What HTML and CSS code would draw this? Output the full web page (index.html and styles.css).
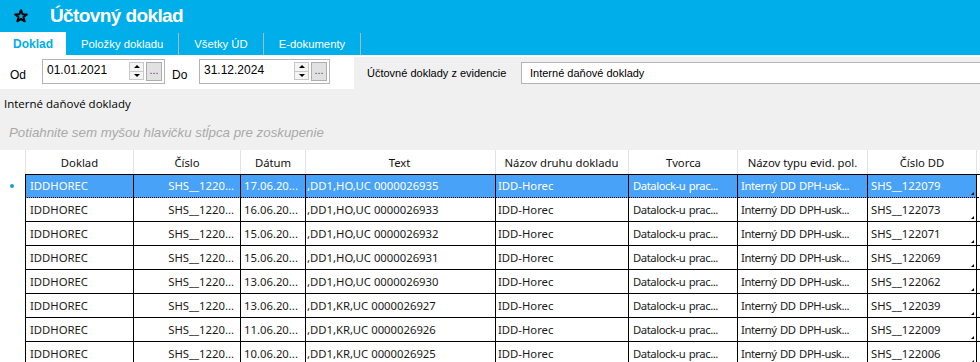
FILE: index.html
```html
<!DOCTYPE html>
<html lang="sk">
<head>
  <meta charset="UTF-8">
  <meta name="viewport" content="width=device-width, initial-scale=1.0">
  <link rel="stylesheet" href="styles.css">
  <title>Účtovný doklad</title>
</head>
<body>
<div class="header">
  <div class="titleRow">
    <svg class="star" width="14" height="14" viewBox="0 0 14 14">
      <polygon points="7,1.2 8.6,5.2 12.8,5.4 9.5,8.1 10.6,12.3 7,9.9 3.4,12.3 4.5,8.1 1.2,5.4 5.4,5.2"
        fill="none" stroke="#000" stroke-width="2" stroke-linejoin="round" />
    </svg>
    <span class="title">Účtovný doklad</span>
  </div>
  <div class="tabs">
    <span class="tab active">Doklad</span>
    <span class="tab">Položky dokladu</span>
    <span class="tab">Všetky ÚD</span>
    <span class="tab">E-dokumenty</span>
  </div>
</div>

<div class="filterRow">
  <span class="filterLabel odLabel">Od</span>
  <div class="dateBox dateFrom">
    <span class="dateText">01.01.2021</span>
    <span class="spinner"><span class="up"></span><span class="down"></span></span>
    <span class="dots">...</span>
  </div>
  <span class="filterLabel doLabel">Do</span>
  <div class="dateBox dateTo">
    <span class="dateText">31.12.2024</span>
    <span class="spinner"><span class="up"></span><span class="down"></span></span>
    <span class="dots">...</span>
  </div>
  <div class="evidPanel">
    <span class="evidLabel">Účtovné doklady z evidencie</span>
    <div class="evidBox">Interné daňové doklady</div>
  </div>
</div>

<div class="sectionTitle">Interné daňové doklady</div>
<div class="groupPanel">Potiahnite sem myšou hlavičku stĺpca pre zoskupenie</div>

<div class="gridWrap">
<table class="grid" id="grid">
  <thead>
    <tr>
      <th class="ind"></th>
      <th class="cDoklad">Doklad</th>
      <th class="cCislo">Číslo</th>
      <th class="cDatum">Dátum</th>
      <th class="cText">Text</th>
      <th class="cDruh">Názov druhu dokladu</th>
      <th class="cTvorca">Tvorca</th>
      <th class="cTyp">Názov typu evid. pol.</th>
      <th class="cDD">Číslo DD</th>
      <th class="cRest"></th>
    </tr>
  </thead>
  <tbody></tbody>
</table>
</div>

<script>
const ROWS = [
  ['17.06.20...', ',DD1,HO,UC 0000026935', 'SHS__122079'],
  ['16.06.20...', ',DD1,HO,UC 0000026933', 'SHS__122073'],
  ['15.06.20...', ',DD1,HO,UC 0000026932', 'SHS__122071'],
  ['15.06.20...', ',DD1,HO,UC 0000026931', 'SHS__122069'],
  ['13.06.20...', ',DD1,HO,UC 0000026930', 'SHS__122062'],
  ['13.06.20...', ',DD1,KR,UC 0000026927', 'SHS__122039'],
  ['11.06.20...', ',DD1,KR,UC 0000026926', 'SHS__122009'],
  ['10.06.20...', ',DD1,KR,UC 0000026925', 'SHS__122006'],
];

const tbody = document.querySelector('#grid tbody');
ROWS.forEach(([datum, text, dd], i) => {
  const row = document.createElement('tr');
  if (i === 0) row.classList.add('selected');
  row.innerHTML = `
    <td class="ind">${i === 0 ? '<span class="current"></span>' : ''}</td>
    <td class="cDoklad">IDDHOREC</td>
    <td class="cCislo">SHS__1220...</td>
    <td class="cDatum">${datum}</td>
    <td class="cText">${text}</td>
    <td class="cDruh">IDD-Horec</td>
    <td class="cTvorca wide">Datalock-u prac...</td>
    <td class="cTyp wide">Interný DD DPH-usk...</td>
    <td class="cDD">${dd}</td>
    <td class="cRest"></td>`;
  tbody.appendChild(row);
});
</script>
</body>
</html>
```

FILE: styles.css
```css
html, body {
  margin: 0;
  height: 362px;
  overflow: hidden;
}

body {
  width: 980px;
  background: #f0f0f0;
  font-family: "Liberation Sans", Arial, sans-serif;
  font-size: 12px;
  color: #000;
}

/* header with title and tabs */
.header {
  background: #00aeea;
  height: 55px;
}

.titleRow {
  height: 32px;
  display: flex;
  align-items: center;
}

.star {
  margin-left: 14px;
  margin-top: -1px;
}

.title {
  margin-left: 22px;
  color: #fff;
  font-weight: bold;
  font-size: 19px;
  letter-spacing: -0.6px;
}

.tabs {
  display: flex;
  height: 23px;
}

.tab {
  display: flex;
  align-items: center;
  padding: 0 15px;
  color: #fff;
  font-size: 11.3px;
  border-right: 1px solid #a8b8c0;
  margin: 1px 0 0;
}

.tab.active {
  width: 66px;
  box-sizing: border-box;
  justify-content: center;
  padding: 0;
  margin: 0;
  background: #fff;
  color: #00aeea;
  font-size: 12px;
  font-weight: bold;
  border-right: none;
}

/* date filter row */
.filterRow {
  height: 34px;
  background: #fff;
  display: flex;
  align-items: flex-start;
}

.filterLabel {
  margin-top: 13px;
}

.odLabel {
  margin-left: 10px;
  width: 32px;
}

.doLabel {
  margin-left: 7px;
  width: 27px;
}

.dateBox {
  margin-top: 4px;
  height: 25px;
  box-sizing: border-box;
  border: 1px solid #b4b4b4;
  display: flex;
  align-items: flex-start;
}

.dateFrom {
  width: 123px;
}

.dateTo {
  width: 131px;
}

.dateText {
  margin: 3px 0 0 4px;
  flex: 1;
  font-size: 12px;
}

.spinner {
  margin-top: 2px;
  width: 15px;
  height: 18px;
  display: flex;
  flex-direction: column;
  border: 1px solid #c8c8c8;
  box-sizing: border-box;
  background: #f4f4f4;
}

.spinner span {
  flex: 1;
  display: flex;
  align-items: center;
  justify-content: center;
}

.spinner .up {
  border-bottom: 1px solid #c8c8c8;
}

.spinner .up::before {
  content: "";
  border: 3px solid transparent;
  border-bottom: 3px solid #000;
  border-top: none;
  width: 0;
  height: 0;
}

.spinner .down::before {
  content: "";
  border: 3px solid transparent;
  border-top: 3px solid #000;
  border-bottom: none;
  width: 0;
  height: 0;
}

.dots {
  margin: 2px 2px 0 2px;
  width: 16px;
  height: 19px;
  box-sizing: border-box;
  border: 1px solid #adadad;
  background: #e1e1e1;
  color: #6a2c8c;
  font-size: 11px;
  line-height: 14px;
  text-align: center;
}

.evidPanel {
  margin-left: 24px;
  margin-top: 2px;
  height: 32px;
  flex: 1;
  background: #f0f0f0;
  display: flex;
  align-items: center;
}

.evidLabel {
  margin-left: 13px;
  width: 154px;
  font-size: 11px;
}

.evidBox {
  flex: 1;
  height: 22px;
  box-sizing: border-box;
  border: 1px solid #b4b4b4;
  border-right: none;
  background: #fff;
  font-size: 11px;
  padding: 4px 0 0 8px;
}

/* grid caption and group panel */
.sectionTitle {
  height: 30px;
  line-height: 30px;
  padding-left: 4px;
  font-family: "Open Sans", "Noto Sans", sans-serif;
  font-size: 11.5px;
}

.groupPanel {
  height: 29px;
  line-height: 28px;
  padding-left: 9px;
  color: #a9a9a9;
  font-style: italic;
  font-size: 13.3px;
}

/* data grid */
.gridWrap {
  margin-top: 2px;
  overflow: hidden;
  background: #fff;
}

.grid {
  table-layout: fixed;
  border-collapse: separate;
  border-spacing: 0;
  width: 1077px;
  font-family: "Noto Sans", "Open Sans", sans-serif;
  font-size: 11.3px;
}

.grid th, .grid td {
  box-sizing: border-box;
  padding: 0 3px;
  white-space: nowrap;
  overflow: hidden;
  text-align: left;
}

.grid th {
  height: 24px;
  font-weight: normal;
  text-align: center;
  border-right: 1px solid #e3e3e3;
  color: #111;
}

.grid th.cDoklad {
  border-left: 1px solid #e3e3e3;
}

.grid td {
  height: 24px;
  border-right: 1px solid #000;
  border-bottom: 1px solid #000;
  color: #1a1a1a;
}

.grid .ind {
  width: 25px;
  border: none;
  padding: 0;
  background: #fff;
}

.grid td.cDoklad {
  border-left: 1px solid #000;
  padding-left: 4px;
}

.grid .cDoklad { width: 109px; }
.grid .cCislo { width: 107px; }
.grid .cDatum { width: 65px; }
.grid .cText { width: 190px; padding-left: 1px; }
.grid .cDruh { width: 133px; padding-left: 2px; }
.grid .cTvorca { width: 109px; padding-left: 4px; }
.grid .cTyp { width: 130px; }
.grid .cDD { width: 109px; position: relative; }
.grid .cRest { width: 100px; }

.grid td.cCislo {
  text-align: right;
  padding-right: 6px;
}

.grid td.wide {
  word-spacing: 1px;
  letter-spacing: -0.45px;
  padding-right: 0;
}

/* small resize mark in the last visible column */
.grid td.cDD::after {
  content: "";
  position: absolute;
  right: 2px;
  bottom: 2px;
  border-left: 3px solid transparent;
  border-bottom: 3px solid #000;
}

.grid tr.selected td:not(.ind) {
  background: #48a2f8;
  color: #fff;
  border-bottom: 1px dotted #000;
  box-shadow: inset 0 1px 0 #000;
}

.grid tr.selected td.cRest {
  background: #fff;
}

.current {
  display: block;
  width: 4px;
  height: 4px;
  border-radius: 50%;
  background: #1d9ae0;
  margin: 0 0 0 10px;
}
```
